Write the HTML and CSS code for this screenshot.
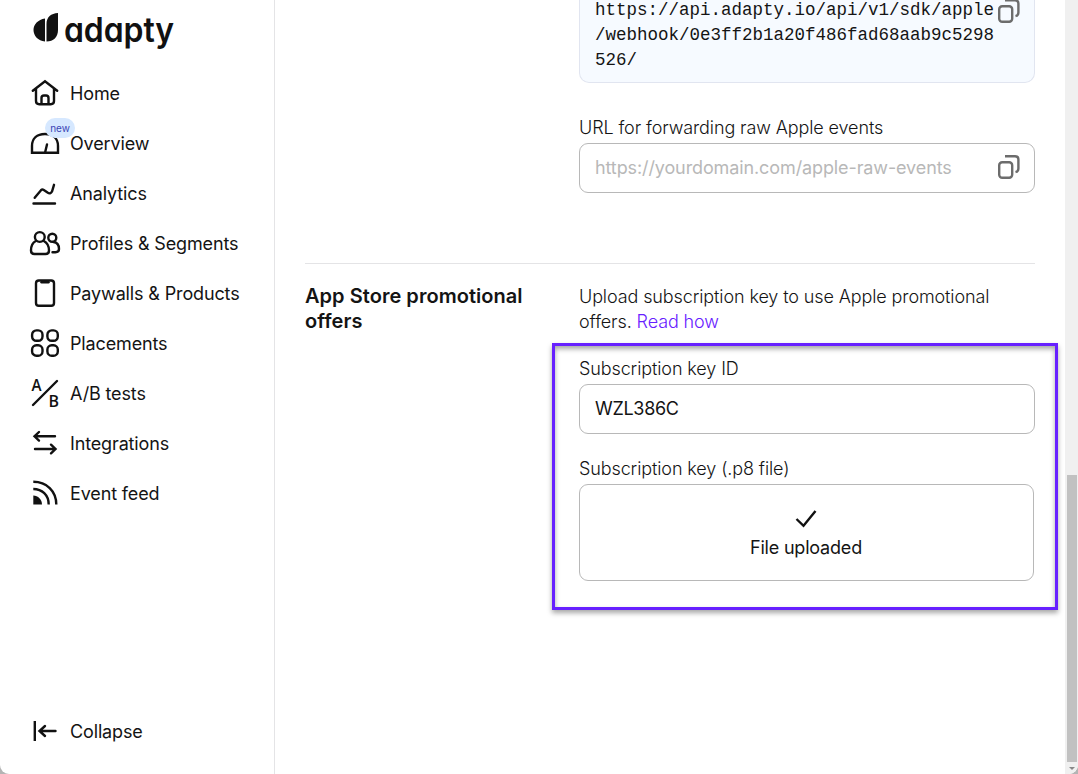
FILE: index.html
```html
<!DOCTYPE html>
<html lang="en">
<head>
<meta charset="utf-8">
<title>Adapty</title>
<link rel="stylesheet" href="styles.css">
</head>
<body>
<div class="app">
  <aside class="sidebar">
    <svg class="logo" width="150" height="44" viewBox="0 0 150 44">
      <path d="M12 12.500C5 13.500 .5 18.500 .5 24S5 35 12 35.500Z M13.500 35.500V18C13.500 11 18 7.500 25 7V24C25 31 20.500 35.500 13.500 35.500Z"/>
      <text class="wordmark" x="31" y="36" textLength="110" lengthAdjust="spacingAndGlyphs">adapty</text>
    </svg>
    <nav class="nav">
      <a class="item"><svg class="icon" viewBox="0 0 30 30"><path d="M2.800 12.800 15 3.200 27.200 12.800M6 11V23Q6 26.200 9.200 26.200H20.800Q24 26.200 24 23V11M11.500 26V20Q11.500 17.500 14 17.500H16Q18.500 17.500 18.500 20V26"/></svg><span class="label">Home</span></a>
      <a class="item"><svg class="icon" viewBox="0 0 30 30"><path d="M2 24.800V18C2 10.500 7 6 15 6S28 10.500 28 18V24.800ZM15.200 24 17 16.500"/></svg><span class="badge">new</span><span class="label">Overview</span></a>
      <a class="item"><svg class="icon" viewBox="0 0 30 30"><path d="M4.700 19.800 11 12.200Q12.200 11 13.800 12L17.500 14.600Q20.500 16.500 22 13.500L24 6.800M3.500 25.500H25"/></svg><span class="label">Analytics</span></a>
      <a class="item"><svg class="icon" viewBox="0 0 30 30"><circle cx="9.800" cy="9" r="4.900"/><path d="M5.800 13C2 15 1 19 1 22.500Q1 26 4.500 26H15.500Q19 26 19 22.500C19 19 17.500 15 13.800 13"/><circle cx="22.300" cy="9.800" r="4"/><path d="M23.500 14C27.500 14.500 29 18 29 21Q29 24.200 25.500 24.200H22.500"/></svg><span class="label">Profiles &amp; Segments</span></a>
      <a class="item"><svg class="icon" viewBox="0 0 30 30"><rect x="6" y="2.500" width="18" height="25.200" rx="2.800"/><path d="M11.500 4.200H18.500"/></svg><span class="label">Paywalls &amp; Products</span></a>
      <a class="item"><svg class="icon" viewBox="0 0 30 30"><rect x="2.100" y="2.400" width="10.400" height="10.400" rx="4.300"/><rect x="17.400" y="2.400" width="10.400" height="10.400" rx="4.300"/><rect x="2.100" y="17.300" width="10.400" height="10.400" rx="4.300"/><rect x="17.400" y="17.300" width="10.400" height="10.400" rx="4.300"/></svg><span class="label">Placements</span></a>
      <a class="item"><svg class="icon" viewBox="0 0 30 30"><path d="M3 27 27 3"/><text class="ab" x="1.500" y="12.500" textLength="10" lengthAdjust="spacingAndGlyphs">A</text><text class="ab" x="18.500" y="28.500" textLength="10.500" lengthAdjust="spacingAndGlyphs">B</text></svg><span class="label">A/B tests</span></a>
      <a class="item"><svg class="icon" viewBox="0 0 30 30"><path d="M25 8.300H5M9 4 4.500 8.300 9 12.600M5 21H25M21 16.700 25.500 21 21 25.300"/></svg><span class="label">Integrations</span></a>
      <a class="item"><svg class="icon" viewBox="0 0 30 30"><path class="solid" d="M3.300 17.500C8 17.500 12 21.500 12 26.500H3.300Z"/><path class="flat" d="M3.300 11C12 11 18.700 17 18.700 26.500M3.300 3.700C16.500 3.700 26.300 13 26.300 26.500"/></svg><span class="label">Event feed</span></a>
    </nav>
    <a class="item collapse"><svg class="icon" viewBox="0 0 30 30"><path class="flat" d="M4.800 5V25"/><path d="M25.500 15H10M15 10 9.500 15 15 20"/></svg><span class="label">Collapse</span></a>
  </aside>

  <main class="main">
    <section class="row">
      <div class="side"></div>
      <div class="body">
        <div class="code">
          <div class="url">https://api.adapty.io/api/v1/sdk/apple<br>/webhook/0e3ff2b1a20f486fad68aab9c5298<br>526/</div>
          <svg class="copy" viewBox="0 0 24 26"><rect x="2.200" y="8.200" width="13" height="15.600" rx="3"/><path d="M8 2.200H18Q21.400 2.200 21.400 5.600V14.500Q21.400 17.500 18.500 18.200"/></svg>
        </div>
        <div class="caption forward">URL for forwarding raw Apple events</div>
        <div class="field">
          <span class="placeholder">https://yourdomain.com/apple-raw-events</span>
          <svg class="copy" viewBox="0 0 24 26"><rect x="2.200" y="8.200" width="13" height="15.600" rx="3"/><path d="M8 2.200H18Q21.400 2.200 21.400 5.600V14.500Q21.400 17.500 18.500 18.200"/></svg>
        </div>
      </div>
    </section>
    <section class="row offers">
      <h2 class="side heading">App Store promotional<br>offers</h2>
      <div class="body">
        <p class="intro">Upload subscription key to use Apple promotional<br>offers. <a class="link">Read how</a></p>
        <div class="form">
          <div class="caption">Subscription key ID</div>
          <div class="field"><span class="value">WZL386C</span></div>
          <div class="caption file">Subscription key (.p8 file)</div>
          <div class="upload">
            <svg class="check" viewBox="0 0 22 20"><path d="M1.500 10 8.500 16.800 20.500 2"/></svg>
            <span class="status">File uploaded</span>
          </div>
          <div class="highlight"></div>
        </div>
      </div>
    </section>
  </main>
  <div class="scrollbar"><div class="thumb"></div><div class="down"></div></div>
</div>
</body>
</html>
```

FILE: styles.css
```css
* { box-sizing: border-box; }
html { background: #b4b4b4; }
body {
  margin: 0;
  height: 774px;
  overflow: hidden;
  font: 400 18px/25px Inter, "Liberation Sans", sans-serif;
  letter-spacing: -.11px;
  color: #141414;
}
.app {
  display: flex;
  height: 774px;
  overflow: hidden;
  background: #fff;
  border-radius: 0 0 9px 9px;
}
.sidebar {
  width: 275px;
  flex: none;
  display: flex;
  flex-direction: column;
  padding: 6px 0 18px;
  border-right: 1px solid #e4e4e6;
}
.logo { margin-left: 33px; flex: none; fill: #111; }
.wordmark {
  font: 600 34px Inter, sans-serif;
  font-feature-settings: "cv11";
}
.nav { margin-top: 18px; }
.item {
  position: relative;
  display: flex;
  align-items: center;
  gap: 10px;
  height: 50px;
  padding-left: 30px;
}
.icon {
  width: 30px;
  height: 30px;
  flex: none;
  overflow: visible;
  fill: none;
  stroke: #111;
  stroke-width: 2.4;
  stroke-linecap: round;
}
.icon .solid { fill: #111; stroke: none; }
.icon .flat { stroke-linecap: butt; }
.icon .ab { font: 600 16px "Open Sans", sans-serif; letter-spacing: 0; fill: #111; stroke: none; }
.label { letter-spacing: -.14px; }
.badge {
  position: absolute;
  left: 45px;
  top: 0;
  width: 30px;
  height: 20px;
  border-radius: 10px;
  background: #d6e8ff;
  color: #3b45b5;
  font-size: 10px;
  letter-spacing: 0;
  line-height: 21px;
  text-align: center;
}
.collapse { margin-top: auto; }
.main { width: 730px; margin-left: 30px; flex: none; }
.row { display: flex; }
.side { width: 274px; flex: none; }
.body { width: 456px; }
.code {
  display: flex;
  align-items: flex-start;
  height: 83px;
  padding-left: 15px;
  overflow: hidden;
  background: #f6faff;
  border: 1px solid #e1e5f0;
  border-top: 0;
  border-radius: 0 0 10px 10px;
}
.url {
  width: 400px;
  margin-top: -2px;
  font: 17.5px/25px "Liberation Mono", monospace;
  letter-spacing: 0;
  white-space: nowrap;
}
.copy {
  width: 24px;
  height: 26px;
  flex: none;
  fill: none;
  stroke: #6c6c6c;
  stroke-width: 2.4;
}
.code .copy { margin: -2px 0 0 2px; }
.caption { height: 25px; font-weight: 300; }
.forward { margin-top: 32px; }
.forward + .field { margin-top: 3px; }
.field {
  display: flex;
  align-items: center;
  justify-content: space-between;
  height: 50px;
  padding: 0 13px 2px 15px;
  border: 1px solid #b8b8b8;
  border-radius: 9px;
}
.placeholder { color: #b8b8b8; }
.value { letter-spacing: -.3px; }
.offers { margin-top: 70px; border-top: 1px solid #e4e4e6; padding-top: 20px; }
.heading { margin: 0; font-size: 20px; line-height: 25px; font-weight: 600; letter-spacing: .04px; }
.intro { margin: 0; font-weight: 300; }
.link { color: #6720ff; }
.form { position: relative; margin-top: 22px; }
.form .field { margin-top: 3px; }
.file { margin-top: 22px; }
.upload {
  display: flex;
  flex-direction: column;
  align-items: center;
  gap: 6px;
  width: 455px;
  height: 97px;
  margin-top: 3px;
  padding: 24px 1px 0 0;
  border: 1px solid #b8b8b8;
  border-radius: 9px;
}
.status { letter-spacing: -.2px; }
.check { width: 22px; height: 20px; fill: none; stroke: #111; stroke-width: 2.4; }
.highlight {
  position: absolute;
  left: -27px;
  top: -13px;
  width: 506px;
  height: 267px;
  border: 3px solid #6720ff;
  box-shadow: 0 3px 5px rgba(0,0,0,.35), inset 0 3px 5px rgba(0,0,0,.35);
}
.scrollbar {
  display: flex;
  flex-direction: column;
  align-items: center;
  justify-content: flex-end;
  width: 13px;
  margin-left: auto;
  padding-bottom: 3px;
  background: #f0f0f0;
}
.thumb { width: 10px; height: 287px; margin-left: 1px; background: #c1c1c1; }
.down {
  margin: 5px 0 1px 1px;
  border: 3px solid transparent;
  border-top-color: #888;
  border-bottom: 0;
}
```
